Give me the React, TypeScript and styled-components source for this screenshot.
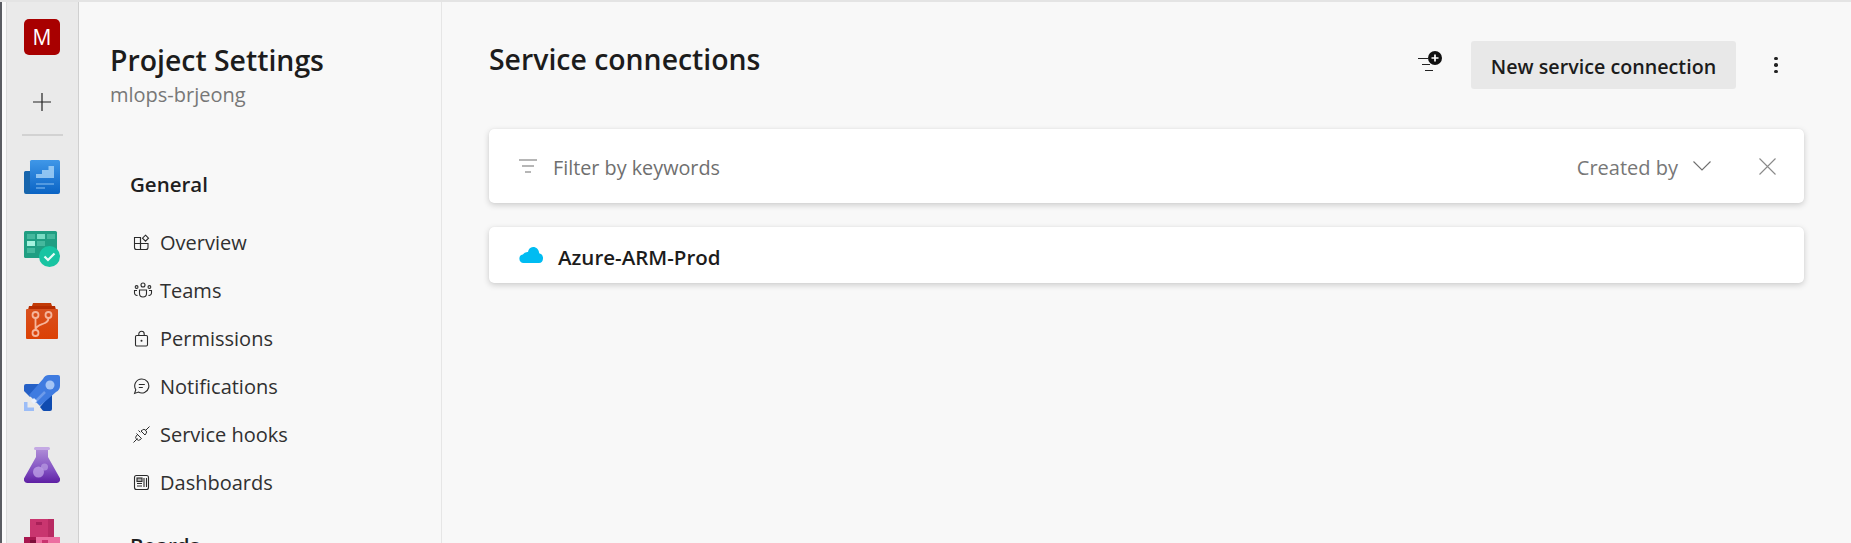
import { FC } from 'react';
import styled, { createGlobalStyle } from 'styled-components';

const GlobalStyle = createGlobalStyle`
    html, body {
        margin: 0;
        padding: 0;
        height: 100%;
        overflow: hidden;
        background: #f8f8f8;
    }
    * {
        box-sizing: border-box;
    }
`;

const navItems: { label: string; icon: JSX.Element }[] = [
    {
        label: 'Overview',
        icon: (
            <svg width="17" height="17" viewBox="0 0 17 17" fill="none" stroke="#2b2b2b" strokeWidth="1.1">
                <path d="M1.5 3.5h6v12h-4a2 2 0 0 1-2-2z" />
                <path d="M1.5 9.5h13.5v4a2 2 0 0 1-2 2H7.5V3.5" />
                <path d="M12.5 1.2l3 3-3 3-3-3z" />
            </svg>
        ),
    },
    {
        label: 'Teams',
        icon: (
            <svg width="20" height="17" viewBox="0 0 20 17" fill="none" stroke="#2b2b2b" strokeWidth="1.1">
                <circle cx="10" cy="3" r="2" />
                <circle cx="3.6" cy="5" r="1.4" />
                <circle cx="16.4" cy="5" r="1.4" />
                <path d="M6.5 8h7v3.5a3.5 3.5 0 0 1-7 0z" />
                <path d="M4 8.5H1.5v2.5a2.5 2.5 0 0 0 3 2.4" />
                <path d="M16 8.5h2.5v2.5a2.5 2.5 0 0 1-3 2.4" />
            </svg>
        ),
    },
    {
        label: 'Permissions',
        icon: (
            <svg width="17" height="17" viewBox="0 0 17 17" fill="none" stroke="#2b2b2b" strokeWidth="1.1">
                <rect x="2.5" y="5.5" width="12" height="10.5" rx="1.2" />
                <path d="M5.8 5.5V4a2.7 2.7 0 0 1 5.4 0v1.5" />
                <circle cx="8.5" cy="10.8" r="1" fill="#2b2b2b" stroke="none" />
            </svg>
        ),
    },
    {
        label: 'Notifications',
        icon: (
            <svg width="17" height="17" viewBox="0 0 17 17" fill="none" stroke="#2b2b2b" strokeWidth="1.1">
                <path d="M8.8 1a7 7 0 1 1-3.4 13.1L1.6 15.4l1.2-3.7A7 7 0 0 1 8.8 1z" />
                <path d="M5.8 6.5h6M5.8 9.5h4" />
            </svg>
        ),
    },
    {
        label: 'Service hooks',
        icon: (
            <svg width="17" height="17" viewBox="0 0 17 17" fill="none" stroke="#2b2b2b" strokeWidth="1">
                <path d="M0.500 16.500l4-4M12.500 4.500l4-4M5.500 4.500l1.800 1.800M3.500 7.500l1.800 1.800" />
                <path d="M4.500 8.500l4 4-1.500 1.200a2 2 0 0 1-2.800 0l-0.900-0.900a2 2 0 0 1 0-2.800z" />
                <path d="M8 5l4 4 1-1.500a2 2 0 0 0 0-2.800l-0.700-0.700a2 2 0 0 0-2.800 0z" />
            </svg>
        ),
    },
    {
        label: 'Dashboards',
        icon: (
            <svg width="17" height="17" viewBox="0 0 17 17" fill="none" stroke="#2b2b2b" strokeWidth="1.1">
                <rect x="1.500" y="1.500" width="14" height="14" rx="2" />
                <rect x="4" y="4" width="5" height="3.500" fill="#2b2b2b" fillOpacity="0.35" />
                <path d="M4 9.500h5M4 12h5M11 4v9M13.500 4v9" />
            </svg>
        ),
    },
];

const App: FC = () => {
    return (
        <>
            <GlobalStyle />
            <Page>
                <ScreenEdge />
                <Rail>
                    <Avatar>M</Avatar>
                    <PlusButton>
                        <svg width="18" height="18" viewBox="0 0 18 18" stroke="#222" strokeWidth="1.200">
                            <path d="M0 9h18M9 0v18" />
                        </svg>
                    </PlusButton>
                    <RailDivider />
                    <ServiceIcons>
                        <svg width="36" height="36" viewBox="0 -1 36 36">
                            <defs>
                                <linearGradient id="ovA" x1="0" y1="0" x2="0" y2="1">
                                    <stop offset="0" stopColor="#3f97e8" />
                                    <stop offset="1" stopColor="#0a63c4" />
                                </linearGradient>
                            </defs>
                            <path d="M0 12.500a1.500 1.500 0 0 1 1.500-1.500H8v23H2a2 2 0 0 1-2-2z" fill="#1765ac" />
                            <path d="M6 1.500A1.500 1.500 0 0 1 7.500 0h27A1.500 1.500 0 0 1 36 1.500V32a2 2 0 0 1-2 2H6z" fill="url(#ovA)" />
                            <path d="M12 18v-4h6v-4h6.500V6H30v12z" fill="#a9d4f8" fillOpacity="0.8" />
                            <path d="M12 24h18" stroke="#8cc2f2" strokeWidth="1" />
                            <path d="M12 28h9" stroke="#8cc2f2" strokeWidth="1" />
                        </svg>
                        <svg width="36" height="36" viewBox="0 0 36 36">
                            <rect x="0" y="0" width="33" height="27" rx="1.500" fill="#209e82" />
                            <g fill="#45b89d">
                                <rect x="3" y="3" width="8" height="5" />
                                <rect x="23" y="3" width="8" height="5" />
                                <rect x="13" y="10" width="8" height="5" />
                                <rect x="3" y="17" width="8" height="5" />
                            </g>
                            <rect x="13" y="3" width="8" height="5" fill="#7adcc4" />
                            <rect x="3" y="10" width="8" height="5" fill="#a5f2de" />
                            <circle cx="25.500" cy="25.500" r="10.500" fill="#18c4a2" />
                            <path d="M20.500 25.500l3.500 3.500 6.500-6.500" fill="none" stroke="#e8fbf6" strokeWidth="2.200" />
                        </svg>
                        <svg width="36" height="36" viewBox="0 0 36 36">
                            <defs>
                                <linearGradient id="reA" x1="0" y1="0" x2="0" y2="1">
                                    <stop offset="0" stopColor="#d8511f" />
                                    <stop offset="1" stopColor="#dc4104" />
                                </linearGradient>
                            </defs>
                            <path d="M9 0h18l1 3H8z" fill="#c23a06" />
                            <path d="M5 3h26l1 4H4z" fill="#b52c00" />
                            <rect x="2" y="6" width="32" height="30" rx="1" fill="url(#reA)" />
                            <g fill="none" stroke="#f5b59b" strokeWidth="1.800">
                                <circle cx="11.500" cy="12" r="3" />
                                <circle cx="24.500" cy="12" r="3" />
                                <circle cx="11.500" cy="30" r="3" />
                                <path d="M11.500 15v12M24.500 15c0 4-3 5-6 6s-6.500 2-7 6" />
                            </g>
                        </svg>
                        <svg width="36" height="36" viewBox="0 0 36 36">
                            <path d="M0 11a2 2 0 0 1 2-2h15L6 22 0 16z" fill="#2560c6" />
                            <path d="M16 32l10-12h2v14a2 2 0 0 1-2 2H20a2 2 0 0 1-1.500-.7z" fill="#0f4bb0" />
                            <path d="M5 20L19 4a7 7 0 0 1 6-4h9a2 2 0 0 1 2 2v9a7 7 0 0 1-4 6L16 31z" fill="#3f7be0" />
                            <circle cx="26" cy="10" r="4.500" fill="#a4c4f5" />
                            <path d="M11 27l10-10" stroke="#6d9bea" strokeWidth="2.500" />
                            <path d="M0 27h3.500v5.500H10V36H0z" fill="#9cbdf7" />
                            <path d="M7 26l3-3 3 3-3 3z" fill="#eaf1fd" />
                        </svg>
                        <svg width="36" height="36" viewBox="0 0 36 36">
                            <defs>
                                <linearGradient id="flA" x1="0" y1="0" x2="0" y2="1">
                                    <stop offset="0" stopColor="#ad8ad6" />
                                    <stop offset="0.6" stopColor="#8150c2" />
                                    <stop offset="1" stopColor="#5e1fa3" />
                                </linearGradient>
                            </defs>
                            <rect x="10" y="0" width="16" height="3" rx="1.500" fill="#c4a9e4" />
                            <path d="M12 3h12v7l11.500 20.500A3.500 3.500 0 0 1 32.500 36h-29A3.500 3.500 0 0 1 0.500 30.500L12 10z" fill="url(#flA)" />
                            <circle cx="14.500" cy="25" r="5.500" fill="#c2a6e8" fillOpacity="0.75" />
                            <circle cx="20.500" cy="20" r="3.500" fill="#b79ae0" fillOpacity="0.75" />
                        </svg>
                        <svg width="36" height="36" viewBox="0 0 36 36">
                            <rect x="6" y="0" width="24" height="18" fill="#c9356f" />
                            <rect x="24" y="0" width="6" height="18" fill="#b82a62" />
                            <rect x="12" y="3" width="6" height="3" fill="#a92058" />
                            <rect x="0" y="18" width="12" height="18" fill="#a8174f" />
                            <rect x="12" y="18" width="24" height="18" fill="#ec6ea0" />
                            <rect x="6" y="21" width="6" height="3" fill="#7d0f3a" />
                            <rect x="18" y="21" width="6" height="3" fill="#c9356f" />
                        </svg>
                    </ServiceIcons>
                </Rail>
                <Sidebar>
                    <ProjectTitle>Project Settings</ProjectTitle>
                    <ProjectName>mlops-brjeong</ProjectName>
                    <SectionTitle>General</SectionTitle>
                    <NavList>
                        {navItems.map((item) => (
                            <NavRow key={item.label}>
                                <NavIcon>{item.icon}</NavIcon>
                                {item.label}
                            </NavRow>
                        ))}
                    </NavList>
                    <BoardsTitle>Boards</BoardsTitle>
                </Sidebar>
                <Main>
                    <Header>
                        <PageTitle>Service connections</PageTitle>
                        <HeaderActions>
                            <IconButton>
                                <svg width="25" height="22" viewBox="0 0 25 22" fill="none" stroke="#222" strokeWidth="1.200">
                                    <path d="M0 8.500h10M4 14.500h8M7 20.500h8" />
                                    <circle cx="17" cy="8" r="7" fill="#111" stroke="none" />
                                    <path d="M13.500 8h7M17 4.500v7" stroke="#fff" strokeWidth="1.700" />
                                </svg>
                            </IconButton>
                            <PrimaryAction>New service connection</PrimaryAction>
                            <MoreButton>
                                <Dot />
                                <Dot />
                                <Dot />
                            </MoreButton>
                        </HeaderActions>
                    </Header>
                    <FilterCard>
                        <svg width="18" height="14" viewBox="0 0 18 14" fill="none" stroke="#6e6e6e" strokeWidth="1.100">
                            <path d="M0 1h18M3 7h12M6 13h6" />
                        </svg>
                        <FilterText>Filter by keywords</FilterText>
                        <CreatedBy>Created by</CreatedBy>
                        <svg width="18" height="10" viewBox="0 0 18 10" fill="none" stroke="#6e6e6e" strokeWidth="1.100">
                            <path d="M0.500 0.500L9 9l8.500-8.500" />
                        </svg>
                        <CloseIcon width="17" height="17" viewBox="0 0 17 17" fill="none" stroke="#8a8a8a" strokeWidth="1.100">
                            <path d="M0.500 0.500l16 16M16.500 0.500l-16 16" />
                        </CloseIcon>
                    </FilterCard>
                    <ConnectionCard>
                        <svg width="24" height="16" viewBox="0 0 24 16">
                            <path d="M4.500 16A4.300 4.300 0 0 1 3.800 7.500 5.500 5.500 0 0 1 9 5 6 6 0 0 1 14 0c3.500 0 6 2.600 6.200 6.300A5 5 0 0 1 24 11.500C24 14 22.500 16 20 16z" fill="#00bcf2" />
                        </svg>
                        <ConnectionName>Azure-ARM-Prod</ConnectionName>
                    </ConnectionCard>
                </Main>
            </Page>
        </>
    );
};

const fontStack = `"Open Sans", "Noto Sans", sans-serif`;

const Page = styled.div`
    display: flex;
    height: 100vh;
    overflow: hidden;
    border-top: 2px solid #e4e4e4;
    font-family: ${fontStack};
    color: #1f1f1f;
`;

const ScreenEdge = styled.div`
    width: 7px;
    flex-shrink: 0;
    background: #fafafa;
    border-left: 2px solid #5a5c62;
    border-right: 1px solid #dcdcdc;
`;

const Rail = styled.div`
    width: 72px;
    flex-shrink: 0;
    display: flex;
    flex-direction: column;
    align-items: center;
    padding: 17px 1px 0 0;
    background: #eaeaea;
    border-right: 1px solid #d0d0d0;

    > * {
        flex-shrink: 0;
    }
`;

const Avatar = styled.div`
    width: 36px;
    height: 36px;
    display: flex;
    align-items: center;
    justify-content: center;
    border-radius: 5px;
    background: #a80000;
    color: #fff;
    font-size: 21px;
`;

const PlusButton = styled.div`
    display: flex;
    margin-top: 38px;
`;

const RailDivider = styled.div`
    width: 41px;
    height: 2px;
    margin-top: 23px;
    background: #d2d2d2;
`;

const ServiceIcons = styled.div`
    display: flex;
    flex-direction: column;
    gap: 36px;
    margin-top: 23px;

    svg {
        display: block;
        flex-shrink: 0;
    }
`;

const Sidebar = styled.div`
    width: 363px;
    flex-shrink: 0;
    padding: 39px 0 0 31px;
    background: #f8f8f8;
    border-right: 1px solid #e6e6e6;
`;

const ProjectTitle = styled.div`
    font-size: 28.400px;
    line-height: 38px;
    font-weight: 600;
    color: #1c1c1c;
`;

const ProjectName = styled.div`
    margin-top: 2px;
    font-size: 20px;
    line-height: 28px;
    color: #777;
`;

const SectionTitle = styled.div`
    margin: 61px 0 0 20px;
    font-size: 20.500px;
    line-height: 28px;
    font-weight: 600;
`;

const NavList = styled.div`
    display: flex;
    flex-direction: column;
    margin: 20px 0 0 20px;
`;

const NavRow = styled.div`
    display: flex;
    align-items: center;
    height: 48px;
    font-size: 20px;
    color: #303030;
`;

const NavIcon = styled.span`
    width: 30px;
    padding-left: 3px;
    display: flex;
    align-items: center;
`;

const BoardsTitle = styled(SectionTitle)`
    margin-top: 25px;
`;

const Main = styled.div`
    flex: 1;
    min-width: 0;
    padding: 39px 47px 0 47px;
    background: #f8f8f8;
`;

const Header = styled.div`
    display: flex;
    align-items: flex-start;
    justify-content: space-between;
    height: 48px;
    margin-bottom: 40px;
`;

const PageTitle = styled.h1`
    margin: 0;
    font-size: 28.400px;
    line-height: 37px;
    font-weight: 600;
    color: #1c1c1c;
`;

const HeaderActions = styled.div`
    display: flex;
    align-items: center;
`;

const IconButton = styled.div`
    display: flex;
    margin: 0 28px 8px 0;
`;

const PrimaryAction = styled.button`
    height: 48px;
    width: 265px;
    padding: 2px 0 0;
    border: none;
    border-radius: 3px;
    background: #e8e8e8;
    color: #1c1c1c;
    font-family: inherit;
    font-size: 19.700px;
    font-weight: 600;
`;

const MoreButton = styled.div`
    display: flex;
    flex-direction: column;
    align-items: center;
    gap: 3px;
    margin: 0 26px 0 38px;
    width: 4px;
`;

const Dot = styled.span`
    width: 3.500px;
    height: 3.500px;
    border-radius: 50%;
    background: #222;
`;

const Card = styled.div`
    display: flex;
    align-items: center;
    background: #fff;
    border-radius: 5px;
    box-shadow: 0 2px 6px rgba(0, 0, 0, 0.18), 0 0 1px rgba(0, 0, 0, 0.1);
    padding-left: 30px;
`;

const FilterCard = styled(Card)`
    height: 74px;
`;

const FilterText = styled.span`
    flex: 1;
    margin-left: 16px;
    padding-top: 3px;
    font-size: 19.800px;
    color: #6f6f6f;
`;

const CreatedBy = styled.span`
    margin-right: 15px;
    padding-top: 3px;
    font-size: 20px;
    color: #777;
`;

const CloseIcon = styled.svg`
    margin: 0 28px 0 48px;
`;

const ConnectionCard = styled(Card)`
    height: 56px;
    margin-top: 24px;
`;

const ConnectionName = styled.span`
    margin-left: 15px;
    padding-top: 3px;
    font-size: 20.500px;
    font-weight: 600;
    color: #1c1c1c;
`;

export default App;
